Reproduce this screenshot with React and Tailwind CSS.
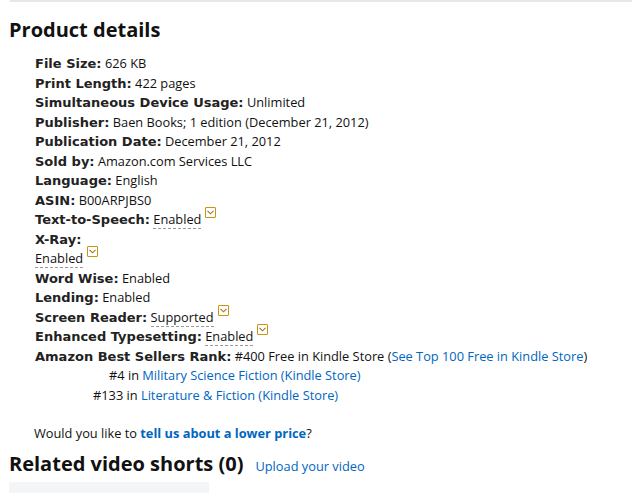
import { useState } from 'react'

const rows = [
  { label: 'File Size:', value: '626 KB' },
  { label: 'Print Length:', value: '422 pages' },
  { label: 'Simultaneous Device Usage:', value: 'Unlimited' },
  { label: 'Publisher:', value: 'Baen Books; 1 edition (December 21, 2012)' },
  { label: 'Publication Date:', value: 'December 21, 2012' },
  { label: 'Sold by:', value: 'Amazon.com Services LLC' },
  { label: 'Language:', value: 'English' },
  { label: 'ASIN:', value: 'B00ARPJBS0' },
  { label: 'Text-to-Speech:', value: 'Enabled', pop: true },
  { label: 'X-Ray:', value: 'Enabled', pop: true, wrap: true },
  { label: 'Word Wise:', value: 'Enabled' },
  { label: 'Lending:', value: 'Enabled' },
  { label: 'Screen Reader:', value: 'Supported', pop: true },
  { label: 'Enhanced Typesetting:', value: 'Enabled', pop: true },
]

const body = { fontFamily: '"Open Sans", "Noto Sans", Arial, sans-serif' }
const bold = { fontFamily: '"DejaVu Sans", Verdana, sans-serif' }

export default function App() {
  return (
    <div className="min-h-[493px] w-[632px] bg-white text-[#111]" style={body}>
      <div className="ml-[10px] border-t-2 border-[#e7e7e7]" />
      <h2 className="ml-[9px] mt-[13px] text-[20px] font-bold leading-[30px] text-[#111]">Product details</h2>

      <ul className="ml-[35px] mt-[9px] text-[12.8px] leading-[19.5px]">
        {rows.map((r) => (
          <li key={r.label}>
            <Label>{r.label}</Label>
            {r.wrap ? <br /> : ' '}
            {r.pop ? <Popover text={r.value} /> : r.value}
          </li>
        ))}
        <li>
          <Label>Amazon Best Sellers Rank:</Label> #400 Free in Kindle Store (
          <a className="text-[#0066c0]">See Top 100 Free in Kindle Store</a>)
        </li>
        <li className="pl-[74px]">
          #4 in <a className="text-[#0066c0]">Military Science Fiction (Kindle Store)</a>
        </li>
        <li className="pl-[58px]">
          #133 in <a className="text-[#0066c0]">Literature &amp; Fiction (Kindle Store)</a>
        </li>
      </ul>

      <p className="ml-[34px] mt-[19px] text-[12.8px] leading-[19.5px]">
        Would you like to <a className="font-bold text-[#0066c0]">tell us about a lower price</a>?
      </p>

      <div className="ml-[9px] mt-[5px] flex items-baseline gap-3">
        <h2 className="text-[20px] font-bold leading-[30px]">Related video shorts (0)</h2>
        <a className="text-[12.8px] text-[#0066c0]">Upload your video</a>
      </div>
      <div className="ml-[9px] mt-[3px] h-[12px] w-[200px] bg-[#f3f5f6]" />
    </div>
  )
}

function Label({ children }) {
  return (
    <span className="text-[13px] font-bold text-[#222]" style={bold}>
      {children}
    </span>
  )
}

function Popover({ text }) {
  const [open, setOpen] = useState(false)
  return (
    <span className="inline-flex items-start">
      <span className="border-b border-dashed border-[#999] leading-[17px]">{text}</span>
      <button
        onClick={() => setOpen(!open)}
        className="ml-[4px] mt-[-4px] flex h-[11px] w-[11px] items-center justify-center rounded-[1px] border border-[#c89411] bg-white"
      >
        <svg width="7" height="5" viewBox="0 0 7 5">
          <path d="M0.5 0.8 L3.5 3.8 L6.5 0.8" fill="none" stroke="#a8731a" strokeWidth="1.1" />
        </svg>
      </button>
    </span>
  )
}
